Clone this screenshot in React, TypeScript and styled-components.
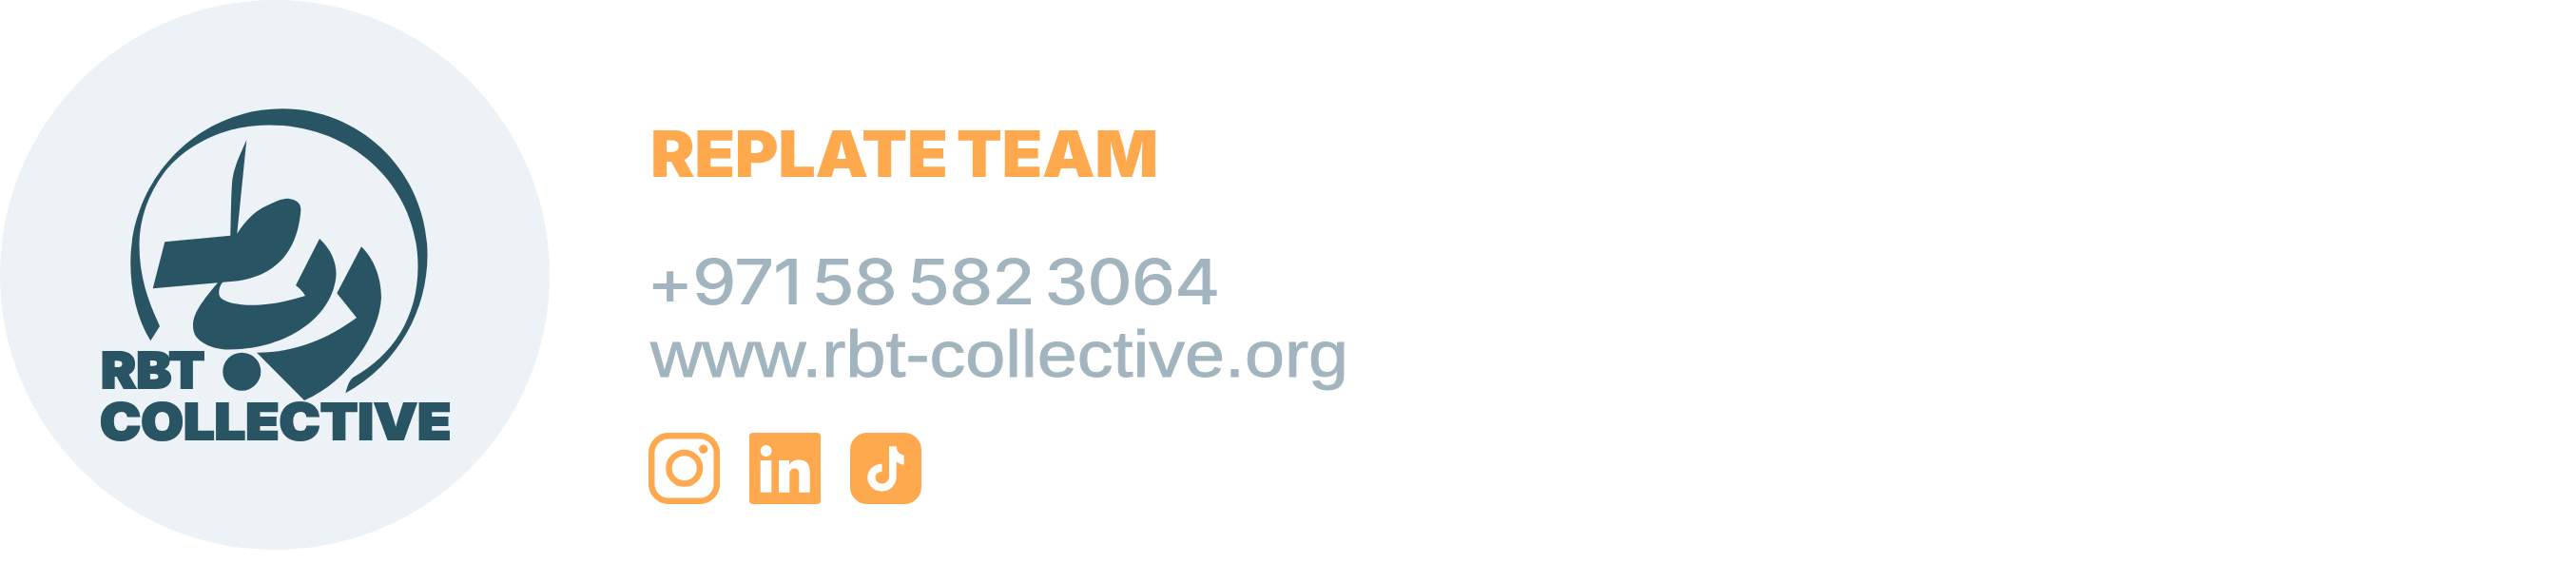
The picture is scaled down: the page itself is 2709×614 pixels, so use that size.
import React from "react";
import styled, { createGlobalStyle } from "styled-components";

const ORANGE = "#ffa94f";
const SLATE = "#a2b5bf";
const TEAL = "#295464";

const GlobalStyle = createGlobalStyle`
  html, body {
    margin: 0;
    padding: 0;
    background: #ffffff;
  }
`;

export default function App() {
  return (
    <>
      <GlobalStyle />
      <Signature>
        <LogoDisc>
          <LogoMark viewBox="0 0 578 578">
            <path d="M158.3 358.3 C144 335 137.3 305 137.3 276.7 C137.3 187 209 114.3 296.7 114.3 C381 114.3 449.5 183 449.5 268 C449.5 325 420 382 363.3 413.3 C365 408 367 399 372 396.5 C412 374 439.5 335 439.5 280 C439.5 197 372 131.5 283 131.5 C238 131.5 197 151 173 181 C155 205 146.5 232 146.5 257 C146.5 290 155 315 168 343 Z" />
            <path d="M173.3 254.3 L242.3 247.7 C242.8 230 243 205 244 193 C245 178 252 163 259.3 147.3 L249.3 245.7 C258 232 268 222 280 216.5 C290 212 298 208 304 209 C313 210 317 215 316.3 222 C314 248 303 295 234 296.7 C230 302 229 309 232 313 C240 320 256 321 270 320.7 C288 320 305 316 321 311 C318 306 315 303 311 300 L336 251 C346 260 353.5 273 353.5 288 C352 330 305 367.5 240 367.5 C225 367.5 210 361 205 352 C198 335 210 320 229 297.3 L160.7 303.3 Z" />
            <path d="M380 259.3 C392 271 401 290 401 313 C399 350 368 400 320 421 L270 370.7 C310 371 345 356 375 334 L354.3 308.3 Z" />
            <circle cx="254.3" cy="390.7" r="20" />
            <LogoWord transform="translate(106 408) scale(1.07 1)">RBT</LogoWord>
            <LogoWord transform="translate(105 462) scale(1.11 1)">COLLECTIVE</LogoWord>
          </LogoMark>
        </LogoDisc>
        <Details>
          <TeamName>REPLATE TEAM</TeamName>
          <Phone>+971 58 582 3064</Phone>
          <Website>www.rbt-collective.org</Website>
          <Socials>
            <SocialIcon viewBox="0 0 75 75">
              <rect x="3.2" y="3.2" width="68.6" height="68.6" rx="18" fill="none" stroke={ORANGE} strokeWidth="6.5" />
              <circle cx="37.7" cy="37.3" r="16.3" fill="none" stroke={ORANGE} strokeWidth="6.5" />
              <circle cx="57.7" cy="17.3" r="4.7" fill={ORANGE} />
            </SocialIcon>
            <SocialIcon viewBox="0 0 75 75">
              <rect width="75" height="75" rx="4" fill={ORANGE} />
              <circle cx="17.6" cy="19" r="6" fill="#fff" />
              <rect x="11.7" y="29" width="11.6" height="33.7" fill="#fff" />
              <path fill="#fff" d="M31 29 H42 V34 C44 30 48 28.5 52 28.5 C60 28.5 63.7 33 63.7 41 V62.7 H52.3 V43 C52.3 39 50.5 37.5 47.5 37.5 C44 37.5 42.3 40 42.3 43.5 V62.7 H31 Z" />
            </SocialIcon>
            <SocialIcon viewBox="0 0 75 75">
              <rect width="75" height="75" rx="18" fill={ORANGE} />
              <path fill="#fff" d="M41 14.3 H48.7 C49 20 52 23 56.7 23.5 V33.5 C53 33.3 50.5 32 48.7 30.5 V46 C48.7 55 41.8 61.5 33.3 61.5 C25 61.5 18.3 55 18.3 47 C18.3 39 25 32.5 33.5 32.7 V41 C29.5 40.5 26.5 43.5 26.5 47 C26.5 50.5 29.5 53.5 33.5 53.5 C37.5 53.5 41 50.5 41 46 Z" />
            </SocialIcon>
          </Socials>
        </Details>
      </Signature>
    </>
  );
}

const Signature = styled.div`
  display: flex;
  width: 2709px;
  height: 614px;
  background: #ffffff;
  overflow: hidden;
`;

const LogoDisc = styled.div`
  flex: none;
  width: 578px;
  height: 578px;
  border-radius: 50%;
  background: #edf2f7;
`;

const LogoMark = styled.svg`
  display: block;
  width: 578px;
  height: 578px;
  fill: ${TEAL};
`;

const LogoWord = styled.text`
  font-family: Inter, "Liberation Sans", sans-serif;
  font-size: 52px;
  font-weight: 900;
  stroke: ${TEAL};
  stroke-width: 2px;
`;

const Details = styled.div`
  display: flex;
  flex-direction: column;
  margin-left: 104px;
  padding-top: 128px;
`;

const TeamName = styled.div`
  margin-left: 2px;
  font-family: Inter, "Liberation Sans", sans-serif;
  font-size: 67px;
  line-height: 67px;
  font-weight: 900;
  letter-spacing: -0.4px;
  word-spacing: -4px;
  color: ${ORANGE};
  white-space: nowrap;
  transform: scaleX(1.045);
  transform-origin: left center;
`;

const Phone = styled.div`
  margin-top: 67px;
  margin-left: -2px;
  font-family: Inter, "Liberation Sans", sans-serif;
  font-size: 66px;
  line-height: 68px;
  font-weight: 450;
  letter-spacing: -1.1px;
  word-spacing: -7px;
  color: ${SLATE};
  white-space: nowrap;
  transform: scaleX(1.12);
  transform-origin: left center;
`;

const Website = styled.div`
  margin-top: 8px;
  margin-left: 2px;
  font-family: "Liberation Sans", Arial, sans-serif;
  font-size: 68px;
  line-height: 68px;
  color: ${SLATE};
  white-space: nowrap;
  -webkit-text-stroke: 0.9px ${SLATE};
  transform: scaleX(1.11);
  transform-origin: left center;
`;

const Socials = styled.div`
  display: flex;
  gap: 31px;
  margin-top: 49px;
`;

const SocialIcon = styled.svg`
  display: block;
  width: 75px;
  height: 75px;
`;
